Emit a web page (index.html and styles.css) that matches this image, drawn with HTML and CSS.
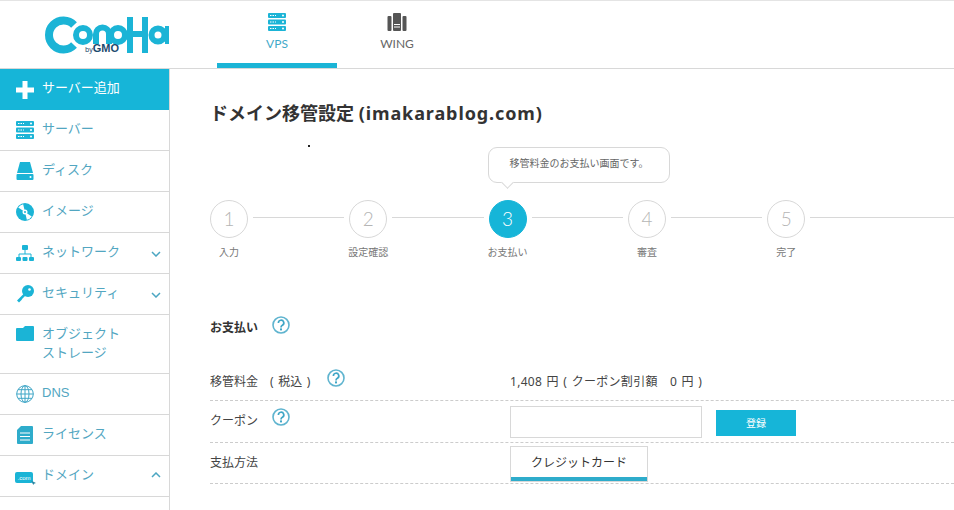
FILE: index.html
```html
<!DOCTYPE html>
<html lang="ja">
<head>
  <meta charset="UTF-8">
  <meta name="viewport" content="width=device-width, initial-scale=1.0">
  <title>ドメイン移管設定</title>
  <link rel="stylesheet" href="styles.css">
</head>
<body>
  <header class="topbar">
    <div class="logo">
      <svg width="127" height="40" viewBox="0 0 127 40">
        <g fill="none" stroke="#1bb4d6">
          <path d="M31 11 A14.500 14.500 0 1 0 31 31" stroke-width="8"/>
          <circle cx="40" cy="21" r="7" stroke-width="6"/>
          <path d="M53 30 V20 A6.500 6.500 0 0 1 66 20 V30" stroke-width="6"/>
          <circle cx="75" cy="21" r="7" stroke-width="6"/>
          <path d="M87 3 V39 M102 3 V39 M87 20 H102" stroke-width="6"/>
          <circle cx="115" cy="21" r="6.500" stroke-width="6"/>
          <path d="M124 12 V30" stroke-width="4"/>
        </g>
      </svg>
      <span class="logo-by">by<b>GMO</b></span>
    </div>
    <nav class="tabs">
      <a class="tab active">
        <svg width="18" height="18" viewBox="0 0 18 18"><use href="#i-server"/></svg>
        VPS
      </a>
      <a class="tab">
        <svg width="20" height="18" viewBox="0 0 20 18" fill="#555">
          <rect x="6" y="0" width="8" height="18" rx="1"/>
          <rect x="0.5" y="3" width="4" height="15" rx="1"/>
          <rect x="15.5" y="3" width="4" height="15" rx="1"/>
          <rect x="7" y="11" width="6" height="1" fill="#fff"/>
          <rect x="7" y="13.5" width="6" height="1" fill="#fff"/>
        </svg>
        WING
      </a>
    </nav>
  </header>

  <svg class="defs" width="0" height="0">
    <symbol id="i-server" viewBox="0 0 18 18">
      <rect y="0" width="18" height="5" rx="1" fill="#1bb4d6"/>
      <rect y="6.5" width="18" height="5" rx="1" fill="#1bb4d6"/>
      <rect y="13" width="18" height="5" rx="1" fill="#1bb4d6"/>
      <path d="M2 2.5h6M2 9h6M2 15.500h6" stroke="#fff" stroke-dasharray="1.500 1" fill="none"/>
      <circle cx="15" cy="2.500" r="1" fill="#fff"/>
      <circle cx="15" cy="9" r="1" fill="#fff"/>
      <circle cx="15" cy="15.500" r="1" fill="#fff"/>
    </symbol>
    <symbol id="i-help" viewBox="0 0 18 18">
      <circle cx="9" cy="9" r="8" fill="#fff" stroke="#5fb4cf" stroke-width="1.600"/>
      <path d="M6.400 7 A2.700 2.700 0 1 1 10.400 9.300 C9.300 9.900 9 10.300 9 11.400" fill="none" stroke="#3fa6c6" stroke-width="1.700"/>
      <rect x="8" y="12.400" width="2" height="2" fill="#3fa6c6"/>
    </symbol>
  </svg>

  <div class="page">
    <aside class="sidebar">
      <a class="side-item add">
        <svg class="side-icon" width="18" height="18" viewBox="0 0 18 18"><path d="M6.500 0h5v6.500H18v5h-6.500V18h-5v-6.500H0v-5h6.500z" fill="#fff"/></svg>
        <span>サーバー追加</span>
      </a>
      <a class="side-item">
        <svg class="side-icon" width="18" height="18" viewBox="0 0 18 18"><use href="#i-server"/></svg>
        <span>サーバー</span>
      </a>
      <a class="side-item">
        <svg class="side-icon" width="18" height="18" viewBox="0 0 18 18"><path d="M4 0h10l3 11H1z" fill="#1bb4d6"/><rect x="0.500" y="12" width="17" height="6" rx="1" fill="#1bb4d6"/><circle cx="14.500" cy="15" r="1" fill="#fff"/></svg>
        <span>ディスク</span>
      </a>
      <a class="side-item">
        <svg class="side-icon" width="18" height="18" viewBox="0 0 18 18"><circle cx="9" cy="9" r="9" fill="#1bb4d6"/><path d="M9 9L6 1.500A8 8 0 0 1 12 1.500zM9 9L6 16.500A8 8 0 0 0 12 16.500z" fill="#fff" transform="rotate(-35 9 9)"/><circle cx="9" cy="9" r="2.500" fill="#fff"/><circle cx="9" cy="9" r="1" fill="#1bb4d6"/></svg>
        <span>イメージ</span>
      </a>
      <a class="side-item">
        <svg class="side-icon" width="18" height="18" viewBox="0 0 18 18" fill="#1bb4d6"><rect x="6" y="1" width="6" height="5" rx="1"/><path d="M9 6v4M3 13v-3h12v3" fill="none" stroke="#1bb4d6"/><rect x="0" y="13" width="5" height="4" rx="1"/><rect x="6.500" y="13" width="5" height="4" rx="1"/><rect x="13" y="13" width="5" height="4" rx="1"/></svg>
        <span>ネットワーク</span>
        <svg class="chev" width="10" height="6" viewBox="0 0 10 6"><path d="M1 1l4 4 4-4" fill="none" stroke="#4ba6c2" stroke-width="1.500"/></svg>
      </a>
      <a class="side-item">
        <svg class="side-icon" width="18" height="18" viewBox="0 0 18 18" fill="#1bb4d6"><circle cx="12" cy="6" r="6"/><path d="M8.500 8L1 15.500l2 2 1.500-1.500 1-1 1-1.500 3.500-3.500z"/><circle cx="13.500" cy="4.500" r="1.300" fill="#fff"/></svg>
        <span>セキュリティ</span>
        <svg class="chev" width="10" height="6" viewBox="0 0 10 6"><path d="M1 1l4 4 4-4" fill="none" stroke="#4ba6c2" stroke-width="1.500"/></svg>
      </a>
      <a class="side-item tall">
        <svg class="side-icon" width="18" height="18" viewBox="0 0 18 18"><path d="M1 3h6l2-2h8a1 1 0 0 1 1 1v13a1 1 0 0 1-1 1H1a1 1 0 0 1-1-1V4a1 1 0 0 1 1-1z" fill="#1bb4d6"/></svg>
        <span>オブジェクト<br>ストレージ</span>
      </a>
      <a class="side-item">
        <svg class="side-icon" width="18" height="18" viewBox="0 0 18 18" fill="none" stroke="#3fa6c6"><circle cx="9" cy="9" r="8.300"/><ellipse cx="9" cy="9" rx="4" ry="8.300"/><path d="M9 .7v16.600M.7 9h16.600M2 4.700h14M2 13.300h14"/></svg>
        <span class="latin">DNS</span>
      </a>
      <a class="side-item">
        <svg class="side-icon" width="18" height="18" viewBox="0 0 18 18"><path d="M5 0h11a1 1 0 0 1 1 1v16a1 1 0 0 1-1 1H2a1 1 0 0 1-1-1V4z" fill="#2eaccb"/><path d="M4 7h10M4 10.500h10M4 14h10" stroke="#fff"/></svg>
        <span>ライセンス</span>
      </a>
      <a class="side-item">
        <svg class="side-icon wide" width="21" height="18" viewBox="0 0 21 18"><rect y="5" width="18" height="11" rx="2" fill="#1bb4d6"/><text x="9" y="12.500" class="com">.com</text><path d="M16 13.500l5 2.500-2 .7-.7 1.300z" fill="#2a87a3"/></svg>
        <span>ドメイン</span>
        <svg class="chev up" width="10" height="6" viewBox="0 0 10 6"><path d="M1 5l4-4 4 4" fill="none" stroke="#4ba6c2" stroke-width="1.500"/></svg>
      </a>
    </aside>

    <main class="content">
      <h1>ドメイン移管設定 <span class="domain">(imakarablog.com)</span></h1>
      <i class="speck"></i>

      <div class="balloon">移管料金のお支払い画面です。</div>

      <ol class="steps">
        <li class="step"><b class="num">1</b><span class="step-name">入力</span></li>
        <li class="step"><b class="num">2</b><span class="step-name">設定確認</span></li>
        <li class="step current"><b class="num">3</b><span class="step-name">お支払い</span></li>
        <li class="step"><b class="num">4</b><span class="step-name">審査</span></li>
        <li class="step"><b class="num">5</b><span class="step-name">完了</span></li>
      </ol>

      <h2>お支払い<svg class="help" width="18" height="18"><use href="#i-help"/></svg></h2>

      <div class="row first">
        <div class="label">移管料金　( 税込 )<svg class="help" width="18" height="18"><use href="#i-help"/></svg></div>
        <div class="value price">1,408 円 ( クーポン割引額　0 円 )</div>
      </div>
      <div class="row second">
        <div class="label">クーポン<svg class="help" width="18" height="18"><use href="#i-help"/></svg></div>
        <div class="value coupon">
          <input class="coupon-input" type="text">
          <button class="coupon-btn">登録</button>
        </div>
      </div>
      <div class="row third">
        <div class="label">支払方法</div>
        <div class="value"><div class="pay-tab">クレジットカード</div></div>
      </div>
    </main>
  </div>
</body>
</html>
```

FILE: styles.css
```css
html, body {
  margin: 0;
  height: 510px;
  overflow: hidden;
}
body {
  font-family: "Noto Sans", "Noto Sans CJK JP", sans-serif;
  font-size: 12px;
  color: #444;
  background-color: #fff;
  border-top: 1px solid #e4e4e4;
  box-sizing: border-box;
}
.defs {
  display: block;
  position: absolute;
}
.topbar {
  display: flex;
  height: 67px;
  border-bottom: 1px solid #d8d8d8;
}
.logo {
  width: 170px;
  position: relative;
  box-sizing: border-box;
  padding: 13px 0 0 43px;
  overflow: hidden;
}
.logo-by {
  position: absolute;
  left: 85px;
  top: 42px;
  font-size: 7px;
  line-height: 11px;
  color: #1d4a6e;
}
.logo-by b {
  font-family: "Liberation Sans", sans-serif;
  font-size: 11px;
  font-weight: 700;
}
.tabs {
  display: flex;
  margin-left: 47px;
}
.tab {
  width: 120px;
  box-sizing: border-box;
  height: 67px;
  padding-top: 12px;
  text-align: center;
  font-family: "Lato", sans-serif;
  font-size: 12px;
  color: #666;
  line-height: 16px;
}
.tab svg {
  display: block;
  margin: 0 auto 5px;
}
.tab.active {
  color: #3fa9c9;
  border-bottom: 5px solid #1bb4d6;
}
.page {
  display: flex;
}
.sidebar {
  width: 169px;
  flex: none;
  height: 441px;
  border-right: 1px solid #d8d8d8;
}
.side-item {
  display: flex;
  align-items: center;
  height: 40px;
  border-bottom: 1px solid #d8d8d8;
  padding-left: 16px;
  font-size: 13px;
  line-height: 19px;
  color: #52a6c1;
  position: relative;
}
.side-item span {
  padding-bottom: 3px;
}
.side-item.add {
  height: 41px;
  background-color: #16b5d8;
  border-bottom: none;
  color: #fff;
}
.side-item.add span {
  padding-bottom: 5px;
}
.side-item.tall {
  height: 58px;
}
.side-icon {
  flex: none;
  margin-right: 8px;
}
.side-icon.wide {
  margin-left: -1px;
  margin-right: 6px;
}
.side-item.tall .side-icon {
  align-self: flex-start;
  margin-top: 10px;
}
.latin {
  font-family: "Liberation Sans", sans-serif;
  font-size: 13px;
}
.com {
  font-family: "Liberation Sans", sans-serif;
  font-size: 6px;
  fill: #fff;
  text-anchor: middle;
}
.chev {
  position: absolute;
  right: 8px;
  top: 18px;
}
.chev.up {
  top: 16px;
}
.content {
  flex: 1;
  min-width: 0;
  padding: 0 0 0 40px;
  position: relative;
}
h1 {
  margin: 31px 0 0;
  font-size: 18px;
  line-height: 26px;
  font-weight: 700;
  color: #333;
}
.domain {
  letter-spacing: 0.9px;
}
.speck {
  position: absolute;
  left: 138px;
  top: 76px;
  width: 2px;
  height: 2px;
  background-color: #222;
}
.balloon {
  position: relative;
  margin: 21px 0 0 278px;
  width: 182px;
  height: 36px;
  box-sizing: border-box;
  border: 1px solid #d8d8d8;
  border-radius: 9px;
  text-align: center;
  font-size: 10px;
  line-height: 30px;
  color: #666;
}
.balloon::after {
  content: "";
  position: absolute;
  left: 14px;
  bottom: -5px;
  width: 8px;
  height: 8px;
  background-color: #fff;
  border-right: 1px solid #d8d8d8;
  border-bottom: 1px solid #d8d8d8;
  transform: rotate(45deg);
}
.steps {
  display: flex;
  list-style: none;
  margin: 17px 0 0;
  padding: 0;
}
.step {
  width: 139.3px;
  flex: none;
  position: relative;
  height: 62px;
}
.step:last-child {
  flex: 1;
}
.step::after {
  content: "";
  position: absolute;
  left: 43px;
  right: 5px;
  top: 17px;
  border-top: 1px solid #d8d8d8;
}
.step:last-child::after {
  right: 0;
}
.num {
  display: block;
  width: 38px;
  height: 38px;
  box-sizing: border-box;
  border: 1px solid #d8d8d8;
  border-radius: 50%;
  text-align: center;
  font-family: "Lato", sans-serif;
  font-size: 19px;
  font-weight: 300;
  line-height: 36px;
  color: #b5b5b5;
}
.step.current .num {
  background-color: #16b5d8;
  border-color: #16b5d8;
  color: #fff;
}
.step-name {
  width: 38px;
  margin-top: 7px;
  display: flex;
  justify-content: center;
  white-space: nowrap;
  font-size: 10px;
  line-height: 14px;
  color: #777;
}
h2 {
  display: flex;
  align-items: center;
  margin: 57px 0 0;
  font-size: 12px;
  line-height: 18px;
  font-weight: 700;
  color: #333;
}
.help {
  margin-left: 14px;
  margin-top: -7px;
}
.row {
  display: flex;
  align-items: center;
  border-bottom: 1px dashed #ccc;
}
.row.first {
  height: 42px;
  margin-top: 21px;
}
.row.second {
  height: 41px;
}
.row.third {
  height: 40px;
}
.label {
  display: flex;
  align-items: center;
  width: 300px;
  flex: none;
  color: #444;
}
.first .label {
  padding-top: 4px;
  word-spacing: 1.5px;
}
.first .help {
  margin-left: 17px;
}
.price {
  padding-top: 4px;
  letter-spacing: 0.3px;
  word-spacing: 1px;
}
.second .label {
  padding-bottom: 3px;
}
.third .label {
  padding-bottom: 2px;
}
.value {
  color: #444;
}
.coupon {
  display: flex;
  align-items: flex-start;
  gap: 14px;
}
.coupon-input {
  width: 192px;
  height: 32px;
  box-sizing: border-box;
  border: 1px solid #d8d8d8;
  margin: 0;
  padding: 0;
}
.coupon-btn {
  width: 80px;
  height: 26px;
  margin-top: 4px;
  border: none;
  padding: 0;
  background-color: #16b5d8;
  color: #fff;
  font-family: inherit;
  font-size: 10px;
}
.pay-tab {
  width: 138px;
  height: 36px;
  margin-top: 2px;
  box-sizing: border-box;
  border: 1px solid #d8d8d8;
  box-shadow: inset 0 -4px 0 #2eaccb;
  text-align: center;
  line-height: 32px;
  color: #333;
}
```
